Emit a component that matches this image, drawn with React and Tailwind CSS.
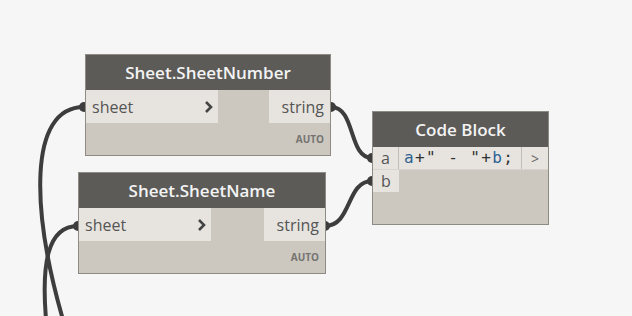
const wires = [
  "M84,107 C28,107 30,210 66,330",
  "M78,226 C48,226 40,262 47,330",
  "M331,107 C356,107 348,158 372,158",
  "M325,226 C352,226 346,181 372,181",
];

const ends = [
  [84, 107],
  [78, 226],
  [331, 107],
  [372, 158],
  [325, 226],
  [372, 181],
];

const NodeCard = ({ title, left, top, width, input, output }) => (
  <div
    className="absolute flex flex-col border border-[#8e8a84] bg-[#ccc8c0]"
    style={{ left, top, width, height: 102 }}
  >
    <div className="h-[35px] bg-[#5c5b58] flex items-center justify-center text-[17px] font-semibold text-[#f3f3f3]">
      {title}
    </div>
    <div className="flex h-[33px] justify-between">
      <div className="w-[132px] bg-[#e7e4df] flex items-center justify-between pl-[6px] pr-[4px] text-[16px] text-[#555]">
        <span>{input}</span>
        <svg width="10" height="14" viewBox="0 0 10 14">
          <path d="M2,2 L7,7 L2,12" fill="none" stroke="#444" strokeWidth="2.6" />
        </svg>
      </div>
      <div className="w-[61px] bg-[#e7e4df] flex items-center justify-end pr-[6px] text-[16px] text-[#555]">
        {output}
      </div>
    </div>
    <div className="flex-1 flex items-center justify-end pr-[6px] text-[10px] font-bold text-[#757370]">
      AUTO
    </div>
  </div>
);

export default function App() {
  return (
    <div
      className="relative w-[632px] h-[316px] overflow-hidden bg-[#f6f6f6]"
      style={{ fontFamily: '"Open Sans", sans-serif' }}
    >
      <svg className="absolute inset-0" width="632" height="316">
        {wires.map((d, i) => (
          <path key={i} d={d} fill="none" stroke="#3d3d3d" strokeWidth="4" />
        ))}
        {ends.map(([x, y], i) => (
          <circle key={i} cx={x} cy={y} r="5" fill="#3d3d3d" />
        ))}
      </svg>

      <NodeCard
        title="Sheet.SheetNumber"
        left={85}
        top={54}
        width={246}
        input="sheet"
        output="string"
      />
      <NodeCard
        title="Sheet.SheetName"
        left={78}
        top={172}
        width={248}
        input="sheet"
        output="string"
      />

      {/* Code Block */}
      <div className="absolute left-[372px] top-[111px] w-[177px] h-[114px] flex flex-col border border-[#8e8a84] bg-[#ccc8c0]">
        <div className="h-[35px] bg-[#5c5b58] flex items-center justify-center text-[17px] font-semibold text-[#f3f3f3]">
          Code Block
        </div>
        <div className="flex h-[22px]">
          <div className="w-[26px] bg-[#e7e4df] flex items-center justify-center text-[16px] text-[#555] border-r border-[#c2beb7]">
            a
          </div>
          <div
            className="w-[123px] bg-[#e7e4df] flex items-center pl-[5px] text-[16px] tracking-[1.4px] text-[#333] border-r border-[#c2beb7] whitespace-pre"
            style={{ fontFamily: '"DejaVu Sans Mono", monospace' }}
          >
            <span className="text-[#2f6396]">a</span>+" - "+<span className="text-[#2f6396]">b</span>;
          </div>
          <div className="flex-1 bg-[#e7e4df] flex items-center justify-center text-[14px] text-[#666]">
            &gt;
          </div>
        </div>
        <div className="flex h-[23px] border-t border-[#d8d4ce]">
          <div className="w-[26px] bg-[#e7e4df] flex items-center justify-center text-[16px] text-[#555]">
            b
          </div>
        </div>
      </div>
    </div>
  );
}
